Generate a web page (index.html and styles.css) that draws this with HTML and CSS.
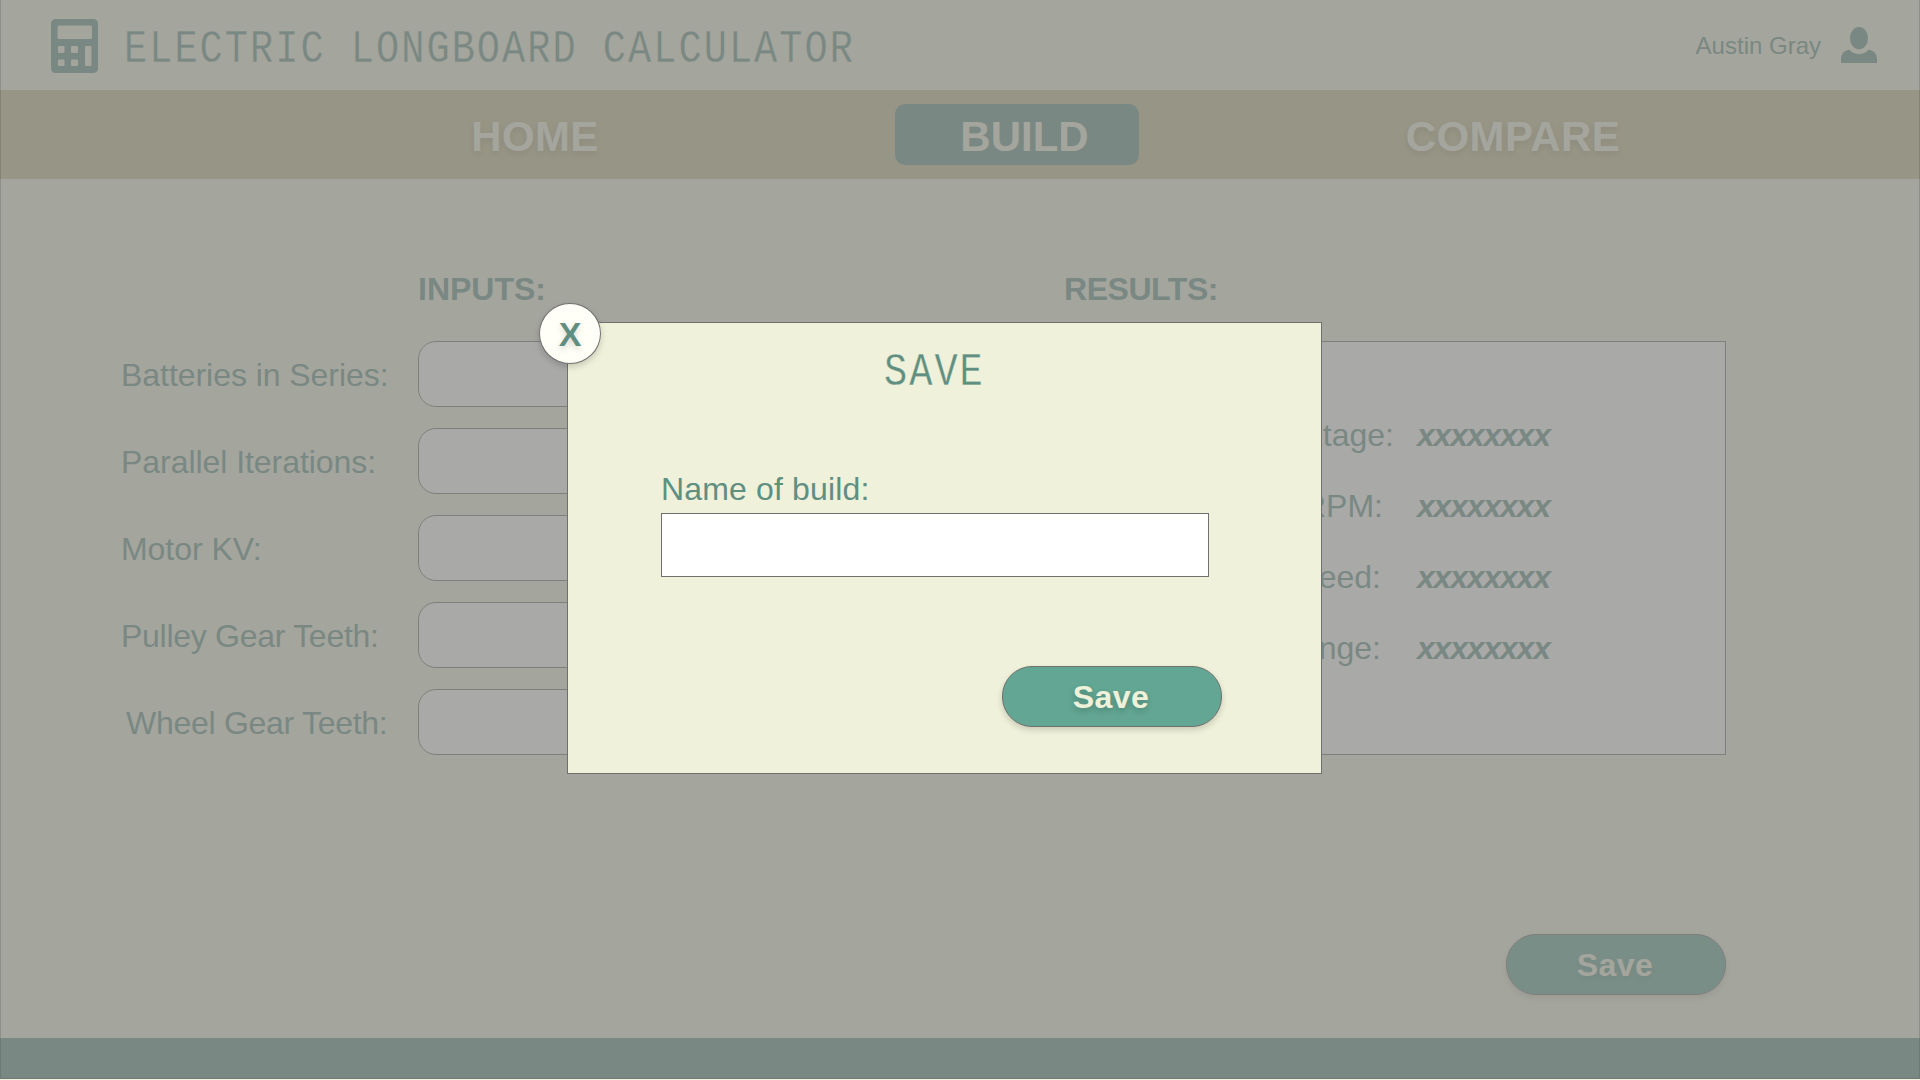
FILE: index.html
```html
<!DOCTYPE html>
<html lang="en">
<head>
<meta charset="utf-8">
<title>Electric Longboard Calculator</title>
<link rel="stylesheet" href="styles.css">
</head>
<body>
<div class="page">
  <header class="header">
    <svg class="logo" width="47" height="54" viewBox="0 0 47 54">
      <path fill="currentColor" fill-rule="evenodd" d="M5 0H42Q47 0 47 5V49Q47 54 42 54H5Q0 54 0 49V5Q0 0 5 0ZM8 6.5Q6.500 6.500 6.500 8V18.500Q6.500 20 8 20H39.500Q41 20 41 18.500V8Q41 6.500 39.500 6.500ZM8 27Q7 27 7 28V33Q7 34 8 34H12.500Q13.500 34 13.500 33V28Q13.500 27 12.500 27ZM21 27Q20 27 20 28V33Q20 34 21 34H26Q27 34 27 33V28Q27 27 26 27ZM35 27Q34 27 34 28V46Q34 47 35 47H39.500Q40.500 47 40.500 46V28Q40.500 27 39.500 27ZM8 40.500Q7 40.500 7 41.500V46Q7 47 8 47H12.500Q13.500 47 13.500 46V41.500Q13.500 40.500 12.500 40.500ZM21 40.500Q20 40.500 20 41.500V46Q20 47 21 47H26Q27 47 27 46V41.500Q27 40.500 26 40.500Z"/>
    </svg>
    <h1 class="brand">ELECTRIC LONGBOARD CALCULATOR</h1>
    <div class="user">
      <span class="user-name">Austin Gray</span>
      <svg width="36" height="36" viewBox="0 0 36 36" fill="currentColor">
        <ellipse cx="18" cy="11.200" rx="9" ry="11.200"/>
        <path d="M0 36V32C0 27 3.500 23 8.500 22.800C11 25.700 14 27 18 27S25 25.700 27.500 22.800C32.500 23 36 27 36 32V36Z"/>
      </svg>
    </div>
  </header>
  <nav class="nav">
    <a class="nav-item nav-home">HOME</a>
    <a class="nav-item nav-active">BUILD</a>
    <a class="nav-item nav-compare">COMPARE</a>
  </nav>
  <main class="main">
    <section class="inputs">
      <h2 class="heading inputs-heading">INPUTS:</h2>
      <div class="fields">
        <label class="field"><span class="label">Batteries in Series:</span><input class="field-input"></label>
        <label class="field"><span class="label">Parallel Iterations:</span><input class="field-input"></label>
        <label class="field"><span class="label">Motor KV:</span><input class="field-input"></label>
        <label class="field"><span class="label label-gear">Pulley Gear Teeth:</span><input class="field-input"></label>
        <label class="field"><span class="label label-gear label-wheel">Wheel Gear Teeth:</span><input class="field-input"></label>
      </div>
    </section>
    <section class="results">
      <h2 class="heading results-heading">RESULTS:</h2>
      <div class="result-box">
        <div class="result"><span class="result-name result-voltage">Voltage:</span><span class="value">xxxxxxxx</span></div>
        <div class="result"><span class="result-name result-rpm">RPM:</span><span class="value">xxxxxxxx</span></div>
        <div class="result"><span class="result-name">Speed:</span><span class="value">xxxxxxxx</span></div>
        <div class="result"><span class="result-name">Range:</span><span class="value">xxxxxxxx</span></div>
      </div>
      <button class="button page-save">Save</button>
    </section>
  </main>
  <footer class="footer"></footer>
</div>
<div class="overlay"></div>
<div class="modal">
  <button class="close">X</button>
  <h2 class="modal-title">SAVE</h2>
  <label class="modal-label" for="build-name">Name of build:</label>
  <input class="modal-input" id="build-name">
  <button class="button modal-save">Save</button>
</div>
</body>
</html>
```
FILE: styles.css
```css
* { box-sizing: border-box; }

body {
  position: relative;
  width: 1920px;
  height: 1080px;
  margin: 0;
  overflow: hidden;
  background: #eff1da;
  color: #608f82;
  font-family: "Liberation Sans", Arial, sans-serif;
  font-size: 32px;
}

h1, h2 { margin: 0; }

.page {
  display: flex;
  flex-direction: column;
  height: 1079px;
}

.header {
  display: flex;
  align-items: center;
  height: 90px;
  padding: 0 43px 0 51px;
}

.logo { margin-top: 2px; }

.brand,
.modal-title {
  font-family: "Liberation Mono", monospace;
  font-size: 46px;
  font-weight: 400;
  line-height: 50px;
  letter-spacing: 2.4px;
  white-space: pre;
  transform: scaleX(0.84);
  transform-origin: left;
  -webkit-text-stroke: 0.3px #eff1da;
}

.brand {
  margin-left: 26px;
  padding-top: 9px;
}

.user {
  display: flex;
  align-items: center;
  gap: 20px;
  margin-left: auto;
}

.user-name {
  padding-top: 1px;
  font-size: 24px;
}

.nav {
  display: grid;
  grid-template-columns: 244px 244px 244px;
  justify-content: center;
  align-items: center;
  column-gap: 246px;
  height: 89px;
  padding-left: 114px;
  background: #c3bc8a;
}

.nav-item {
  height: 61px;
  padding-top: 2px;
  color: #eff1da;
  font-size: 42px;
  font-weight: 700;
  line-height: 61px;
  letter-spacing: 0.4px;
  text-align: center;
  text-shadow: 0 3px 6px rgba(0, 0, 0, 0.2);
}

.nav-home { padding-left: 16px; }
.nav-compare { padding-left: 12px; }

.nav-active {
  padding-left: 15px;
  border-radius: 10px;
  background: #608f82;
  letter-spacing: 0;
  text-shadow: none;
}

.main {
  display: flex;
  flex: 1;
  justify-content: space-between;
  padding: 92px 194px 0 120px;
}

.heading {
  height: 70px;
  font-size: 32px;
  line-height: 36px;
}

.inputs { width: 700px; }
.inputs-heading { padding-left: 298px; }
.results-heading { letter-spacing: -0.45px; }

.fields {
  display: flex;
  flex-direction: column;
  gap: 21px;
}

.field {
  display: grid;
  grid-template-columns: 298px 402px;
  align-items: center;
}

.label {
  padding: 2px 0 0 1px;
  letter-spacing: -0.05px;
}

.label-gear { letter-spacing: -0.28px; }
.label-wheel { padding-left: 6px; }

.field-input {
  height: 66px;
  border: 1px solid #707070;
  border-radius: 18px;
  background: #fff;
}

.results {
  display: flex;
  flex-direction: column;
  width: 662px;
}

.result-box {
  height: 414px;
  padding-top: 58px;
  border: 1px solid #707070;
  background: #fff;
}

.result {
  display: grid;
  grid-template-columns: 316px auto;
  align-items: center;
  column-gap: 36px;
  height: 71px;
}

.result-name { text-align: right; }
.result-voltage { margin-right: -13px; }
.result-rpm { margin-right: -2px; }

.value {
  font-style: italic;
  font-weight: 700;
  letter-spacing: -1.2px;
}

.button {
  align-self: flex-end;
  width: 220px;
  height: 61px;
  padding: 2px 2px 0 0;
  border: 1px solid #707070;
  border-radius: 30px;
  background: #62a693;
  box-shadow: 0 3px 6px rgba(0, 0, 0, 0.16);
  color: #eff1da;
  font: 700 32px "Liberation Sans", Arial, sans-serif;
  letter-spacing: 0.4px;
  text-shadow: 0 3px 6px rgba(0, 0, 0, 0.2);
}

.page-save { margin-top: 179px; }

.footer {
  height: 41px;
  background: #608f82;
}

.overlay {
  position: absolute;
  inset: 0 0 1px;
  border: 1px solid rgba(80, 80, 80, 0.25);
  border-top: 0;
  background: rgba(133, 133, 131, 0.7);
}

.modal {
  position: absolute;
  top: 322px;
  left: 567px;
  display: flex;
  flex-direction: column;
  width: 755px;
  height: 452px;
  padding: 25px 99px 0 93px;
  border: 1px solid #707070;
  background: #eff1da;
}

.close {
  position: absolute;
  top: -20px;
  left: -29px;
  width: 62px;
  height: 61px;
  padding: 2px 0 0;
  border: 1px solid #707070;
  border-radius: 50%;
  background: #fffff8;
  box-shadow: 0 3px 6px rgba(0, 0, 0, 0.16);
  color: #608f82;
  font: 700 34px "Liberation Sans", Arial, sans-serif;
  text-shadow: 0 3px 6px rgba(0, 0, 0, 0.16);
}

.modal-title { margin-left: 223px; }

.modal-label {
  margin-top: 73px;
  line-height: 36px;
  letter-spacing: 0.15px;
}

.modal-input {
  width: 548px;
  height: 64px;
  margin-top: 6px;
  border: 1px solid #707070;
  background: #fff;
}

.modal-save {
  margin: 89px 0 0;
}
```
